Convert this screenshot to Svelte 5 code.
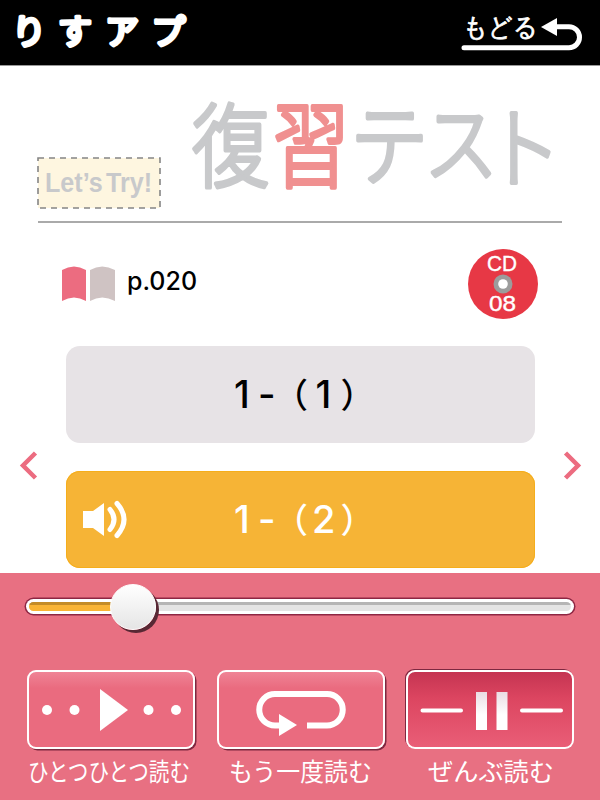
<script lang="ts">
  interface Glyph {
    char: string;
    x: number;
    y: number;
    size: number;
    scale: number;
    accent?: boolean;
  }

  // Title letters, each one is placed and squeezed separately
  const titleGlyphs: Glyph[] = [
    { char: '復', x: 7, y: 113.5, size: 91, scale: 0.85 },
    { char: '習', x: 87.5, y: 113.5, size: 94, scale: 0.82, accent: true },
    { char: 'テ', x: 165, y: 111.5, size: 89, scale: 0.88 },
    { char: 'ス', x: 239, y: 109, size: 84, scale: 0.88 },
    { char: 'ト', x: 300, y: 114.5, size: 89, scale: 0.86 }
  ];

  const questions = [
    { id: 1, number: '1' },
    { id: 2, number: '2' }
  ];

  const controls = [
    { id: 'step', label: 'ひとつひとつ読む', x: 1, width: 162 },
    { id: 'repeat', label: 'もう一度読む', x: 12, width: 143 },
    { id: 'all', label: 'ぜんぶ読む', x: 22, width: 126 }
  ];

  let current = $state(2);
  let mode = $state('all');
  let progress = $state(19.6);
</script>

<div class="app">
  <header class="header">
    <svg class="logo" width="200" height="65" role="img" aria-label="りすアプ">
      <text class="logo-text" x="12 58 105 151.5" y="44">りすアプ</text>
    </svg>
    <button class="back" aria-label="もどる">
      <svg width="140" height="65">
        <text class="back-text" x="2.5" y="36" textLength="75" lengthAdjust="spacingAndGlyphs">もどる</text>
        <path d="M95 26.7h14a10.5 10.5 0 0 1 0 21H4" fill="none" stroke="#fff" stroke-width="5" stroke-linecap="round" />
        <path d="M81 27l16-9v18z" fill="#fff" />
      </svg>
    </button>
  </header>

  <main class="content">
    <div class="title-row">
      <svg class="try" width="125" height="53">
        <rect x="1" y="1" width="122" height="50" fill="#fef6e0" stroke="#858585" stroke-width="1.6" stroke-dasharray="6 5" />
        <text class="try-text" x="8" y="34.5" textLength="107" lengthAdjust="spacingAndGlyphs">Let’s Try!</text>
      </svg>
      <svg class="title" width="400" height="155" role="img" aria-label="復習テスト">
        {#each titleGlyphs as g}
          <text
            class="title-text"
            class:accent={g.accent}
            font-size={g.size}
            transform="translate({g.x} {g.y}) scale({g.scale} 1)">{g.char}</text>
        {/each}
      </svg>
    </div>

    <div class="info-row">
      <div class="page-ref">
        <svg width="54" height="37">
          <path d="M0 5Q12 -2 24 5V36Q12 29 0 36z" fill="#ec6c80" />
          <path d="M28 5Q40 -2 53 5V36Q40 29 28 36z" fill="#cfc3c3" />
        </svg>
        <span class="page-number">p.020</span>
      </div>
      <svg class="disc" width="70" height="70">
        <circle cx="35" cy="35" r="35" fill="#e73845" />
        <circle cx="35" cy="35" r="9.5" fill="#9c9c9c" />
        <circle cx="35" cy="35" r="4.8" fill="#fff" />
        <text class="disc-text" x="34" y="22" textLength="30" lengthAdjust="spacingAndGlyphs">CD</text>
        <text class="disc-text" x="34.5" y="62" textLength="27" lengthAdjust="spacingAndGlyphs">08</text>
      </svg>
    </div>

    <div class="carousel">
      <button class="nav" aria-label="前へ">
        <svg width="18" height="28"><path d="M15.5 2L3 14.5 15.5 27" /></svg>
      </button>
      <div class="questions">
        {#each questions as q}
          <button class="question" class:playing={current === q.id} onclick={() => (current = q.id)}>
            <svg width="469" height="97">
              {#if current === q.id}
                <path d="M17 40H27L38 32V65L27 57H17z" fill="#fff" />
                <path d="M44 38.5Q52 48.5 44 58.5M51 32.5Q65 48.5 51 64.5" fill="none" stroke="#fff" stroke-width="5" stroke-linecap="round" />
              {/if}
              <text class="question-text" y="62"><tspan x="168 192">1-</tspan><tspan class="paren" x="208">（</tspan><tspan x={q.number === '1' ? 249.5 : 246}>{q.number}</tspan><tspan class="paren" x="274.5">）</tspan></text>
            </svg>
          </button>
        {/each}
      </div>
      <button class="nav" aria-label="次へ">
        <svg width="18" height="28"><path d="M2.5 2L15 14.5 2.5 27" /></svg>
      </button>
    </div>
  </main>

  <footer class="player">
    <div class="track">
      <div class="groove">
        <div class="fill" style="width: {progress}%"></div>
      </div>
      <div class="knob" style="left: {progress}%"></div>
    </div>

    <div class="controls">
      {#each controls as c}
        <div class="control">
          <button class="control-button" class:pressed={mode === c.id} aria-label={c.label} onclick={() => (mode = c.id)}>
            <svg width="168" height="79" fill="#fff">
              {#if c.id === 'step'}
                <circle cx="20" cy="40" r="5" />
                <circle cx="47.5" cy="40" r="5" />
                <path d="M73 19L101 40 73 61z" />
                <circle cx="121.5" cy="40" r="5" />
                <circle cx="149" cy="40" r="5" />
              {:else if c.id === 'repeat'}
                <path d="M64 55.5H58A15.75 15.75 0 0 1 58 24H110A15.75 15.75 0 0 1 110 55.5H90" fill="none" stroke="#fff" stroke-width="6" />
                <path d="M62 44L80 55 62 66z" />
              {:else}
                <defs>
                  <linearGradient id="bar" x1="0" y1="0" x2="0" y2="1">
                    <stop offset="0" stop-color="#eadde3" />
                    <stop offset="0.6" stop-color="#fff" />
                  </linearGradient>
                </defs>
                <path d="M16.5 40.5H55M116 40.5H155" stroke="#fff" stroke-width="4" stroke-linecap="round" />
                <rect x="70" y="22" width="11" height="38" fill="url(#bar)" />
                <rect x="90.5" y="22" width="11" height="38" fill="url(#bar)" />
              {/if}
            </svg>
          </button>
          <svg class="label" width="168" height="42">
            <text class="label-text" x={c.x} y="31.5" textLength={c.width} lengthAdjust="spacingAndGlyphs">{c.label}</text>
          </svg>
        </div>
      {/each}
    </div>
  </footer>
</div>

<style>
  :global(body) {
    margin: 0;
    background-color: #ffffff;
  }

  .app {
    width: 600px;
    height: 800px;
    display: flex;
    flex-direction: column;
    overflow: hidden;
    background-color: #ffffff;
    font-family: 'Noto Sans CJK JP', sans-serif;
  }

  button {
    margin: 0;
    padding: 0;
    border: none;
    background: none;
    cursor: pointer;
  }

  svg {
    display: block;
    overflow: visible;
  }

  /* Header */
  .header {
    height: 65px;
    flex-shrink: 0;
    display: flex;
    justify-content: space-between;
    background-color: #000000;
    border-bottom: 1px solid #999999;
  }

  .logo-text {
    font-size: 34px;
    font-weight: 400;
    fill: #ffffff;
    stroke: #ffffff;
    stroke-width: 3.8px;
    stroke-linejoin: round;
  }

  .back-text {
    font-size: 26px;
    font-weight: 500;
    fill: #ffffff;
    stroke: #ffffff;
    stroke-width: 0.7px;
    stroke-linejoin: round;
  }

  /* Title */
  .content {
    height: 507px;
    flex-shrink: 0;
  }

  .title-row {
    height: 155px;
    margin: 0 38px;
    display: flex;
    align-items: flex-start;
    border-bottom: 2px solid #aaaaaa;
  }

  .try {
    flex-shrink: 0;
    margin-top: 91px;
    margin-left: -1px;
  }

  .title {
    flex-shrink: 0;
    margin-left: 23px;
  }

  .try-text {
    font-family: 'Liberation Sans', Arial, sans-serif;
    font-size: 27px;
    font-weight: 700;
    word-spacing: -4px;
    fill: #c8c9cb;
  }

  .title-text {
    font-weight: 300;
    fill: #c8c9cb;
    stroke: #c8c9cb;
    stroke-width: 4px;
    stroke-linejoin: round;
  }

  .title-text.accent {
    fill: #f09090;
    stroke: #f09090;
  }

  /* Page and disc */
  .info-row {
    display: flex;
    justify-content: space-between;
    padding: 26px 62px 0;
  }

  .page-ref {
    display: flex;
    align-items: flex-start;
    padding-top: 16px;
  }

  .page-number {
    margin: 0 0 0 11px;
    font-family: Inter, Arial, sans-serif;
    font-size: 25px;
    font-weight: 500;
    line-height: 32px;
    color: #000000;
  }

  .disc-text {
    font-family: 'Liberation Sans', Arial, sans-serif;
    font-size: 22.5px;
    text-anchor: middle;
    fill: #ffffff;
    stroke: #ffffff;
    stroke-width: 0.4px;
  }

  /* Questions */
  .carousel {
    display: flex;
    justify-content: space-between;
    align-items: center;
    padding: 27px 19.5px 0;
  }

  .nav {
    margin-top: 15px;
  }

  .nav path {
    fill: none;
    stroke: #ec6c80;
    stroke-width: 4.5px;
  }

  .questions {
    display: flex;
    flex-direction: column;
    gap: 28px;
  }

  .question {
    height: 97px;
    border-radius: 14px;
    background-color: #e7e3e6;
  }

  .question.playing {
    background-color: #f6b436;
    box-shadow: inset 0 0 0 1px #f5ae1c;
  }

  .question-text {
    font-family: Inter, 'Noto Sans CJK JP', sans-serif;
    font-size: 38px;
    font-weight: 500;
    fill: #000000;
  }

  .paren {
    font-size: 34px;
    font-weight: 500;
  }

  .question.playing .question-text {
    fill: #ffffff;
  }

  /* Player */
  .player {
    flex: 1;
    background-color: #e87082;
  }

  .track {
    position: relative;
    height: 15px;
    box-sizing: border-box;
    margin: 26px 26px 0;
    padding: 3px;
    border-radius: 8px;
    background-color: #ffffff;
    box-shadow: 0 0 0 1.5px #8e2643;
  }

  .groove {
    height: 9px;
    border-radius: 5px;
    overflow: hidden;
    background: linear-gradient(#b5b5b5 0 3px, #e4e4e4 3px);
  }

  .fill {
    height: 100%;
    background: linear-gradient(#c48c27 0 3px, #f9b435 3px);
  }

  .knob {
    position: absolute;
    top: -15px;
    width: 46px;
    height: 46px;
    margin-left: -23px;
    box-sizing: border-box;
    border: 1px solid #ffffff;
    border-radius: 50%;
    background: linear-gradient(#ffffff, #e5e5e5);
    box-shadow: 3px 3px 0 #582834;
  }

  .controls {
    display: flex;
    justify-content: space-between;
    padding: 56px 26px 0 27px;
  }

  .control-button {
    display: block;
    width: 168px;
    height: 79px;
    border-radius: 9px;
    background: linear-gradient(#f08799, #ea6b7f 18px);
    box-shadow: inset 0 0 0 2px #ffffff, 1.5px 1.5px 0 #7d2840;
  }

  .control-button.pressed {
    background: linear-gradient(#c33351, #dc4560 28px, #ea5f78);
    box-shadow: inset 0 0 0 2px #ffffff, -1px -1px 0 #7d2840;
  }

  .label-text {
    font-size: 25px;
    font-weight: 400;
    fill: #ffffff;
  }
</style>
